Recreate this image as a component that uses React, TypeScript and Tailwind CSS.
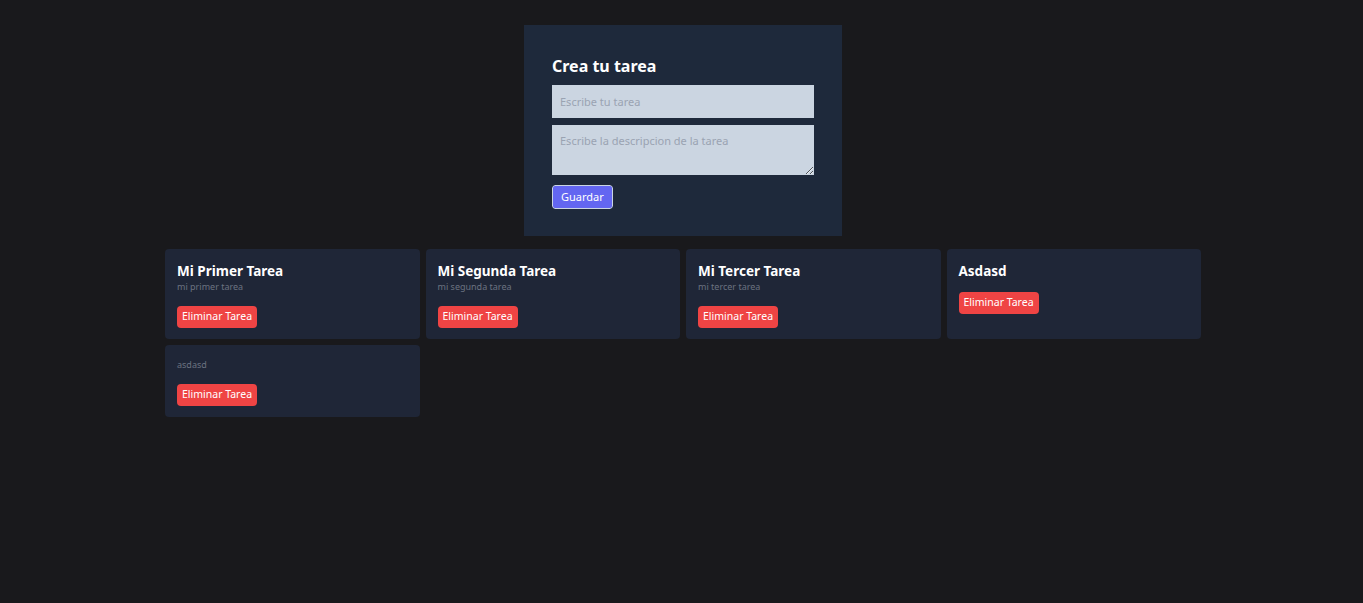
import React from "react";

const tasks = [
  { id: 1, title: "Mi Primer Tarea", description: "mi primer tarea" },
  { id: 2, title: "Mi Segunda Tarea", description: "mi segunda tarea" },
  { id: 3, title: "Mi Tercer Tarea", description: "mi tercer tarea" },
  { id: 4, title: "Asdasd", description: "" },
  { id: 5, title: "", description: "asdasd" },
];

const TaskForm = () => {
  return (
    <form className="mx-auto w-[318px] bg-[#1e293b] px-7 pt-[30px] pb-[27px]">
      <h1 className="mb-[7px] text-[16px] leading-[23px] font-bold text-white">Crea tu tarea</h1>
      <input
        placeholder="Escribe tu tarea"
        className="mb-[7px] block h-[33px] w-full bg-[#cbd5e1] px-2 text-[11px] text-slate-800 placeholder:text-[#9aa3b2] outline-none"
      />
      <textarea
        placeholder="Escribe la descripcion de la tarea"
        className="block h-[50px] w-full bg-[#cbd5e1] px-2 py-2 text-[11px] leading-4 text-slate-800 placeholder:text-[#9aa3b2] outline-none"
      />
      <button
        type="button"
        className="mt-[10px] h-6 rounded-[3px] border border-slate-300 bg-[#6366f1] px-2 text-[11px] text-white outline outline-1 outline-[#1e293b]"
      >
        Guardar
      </button>
    </form>
  );
};

const TaskCard = ({ title, description }: { title: string; description: string }) => {
  return (
    <div className="rounded-[4px] bg-[#1f2637] px-3 pt-[13px] pb-[11px]">
      {title && <h2 className="text-[13.5px] leading-[18px] font-bold text-white">{title}</h2>}
      {description && <p className="text-[9px] leading-[14px] text-[#6b7280]">{description}</p>}
      <button className="mt-3 h-[22px] rounded-[4px] bg-[#ef4444] px-[5px] text-[10.5px] text-white">
        Eliminar Tarea
      </button>
    </div>
  );
};

export default function App() {
  return (
    <div
      className="min-h-[603px] w-full bg-[#19191c] pt-[25px] pl-[3px]"
      style={{ fontFamily: '"Noto Sans", "Open Sans", sans-serif' }}
    >
      <TaskForm />
      <div className="mx-auto mt-[13px] grid w-[1036px] grid-cols-4 gap-[6px]">
        {tasks.map((t) => (
          <TaskCard key={t.id} title={t.title} description={t.description} />
        ))}
      </div>
    </div>
  );
}
